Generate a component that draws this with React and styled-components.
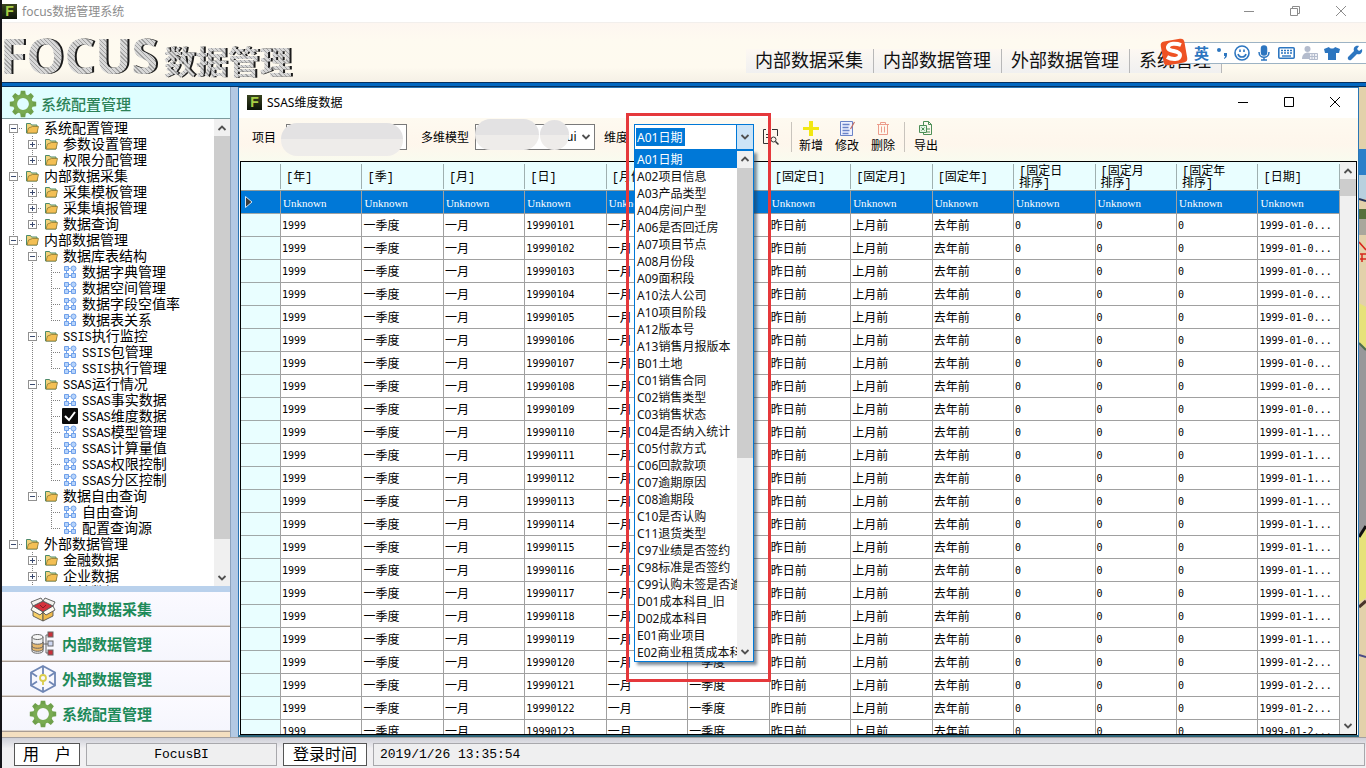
import React, { useState } from "react";
import styled, { createGlobalStyle } from "styled-components";

const GlobalStyle = createGlobalStyle`
    * { box-sizing: border-box; }
    html, body { margin: 0; padding: 0; }
    body {
        font-family: "Noto Sans", "Noto Sans CJK SC", sans-serif;
        font-size: 12px;
        color: #000;
        overflow: hidden;
    }
    button, input, select { font: inherit; color: inherit; margin: 0; border-radius: 0; }
    button { background: none; border: none; padding: 0; cursor: pointer; }
`;

/* ---------- data ---------- */

const MENU = ["内部数据采集", "内部数据管理", "外部数据管理", "系统管理"];

const TREE = [
    { name: "系统配置管理", open: true, children: [
        { name: "参数设置管理", children: [] },
        { name: "权限分配管理", children: [] },
    ] },
    { name: "内部数据采集", open: true, children: [
        { name: "采集模板管理", children: [] },
        { name: "采集填报管理", children: [] },
        { name: "数据查询", children: [] },
    ] },
    { name: "内部数据管理", open: true, children: [
        { name: "数据库表结构", open: true, children: [
            { name: "数据字典管理" }, { name: "数据空间管理" }, { name: "数据字段空值率" }, { name: "数据表关系" },
        ] },
        { name: "SSIS执行监控", open: true, children: [
            { name: "SSIS包管理" }, { name: "SSIS执行管理" },
        ] },
        { name: "SSAS运行情况", open: true, children: [
            { name: "SSAS事实数据" }, { name: "SSAS维度数据" }, { name: "SSAS模型管理" },
            { name: "SSAS计算量值" }, { name: "SSAS权限控制" }, { name: "SSAS分区控制" },
        ] },
        { name: "数据自由查询", open: true, children: [
            { name: "自由查询" }, { name: "配置查询源" },
        ] },
    ] },
    { name: "外部数据管理", open: true, children: [
        { name: "金融数据", children: [] },
        { name: "企业数据", children: [] },
        { name: "土地数据", children: [] },
    ] },
];

const DIMENSIONS = [
    "A01日期", "A02项目信息", "A03产品类型", "A04房间户型", "A06是否回迁房", "A07项目节点",
    "A08月份段", "A09面积段", "A10法人公司", "A10项目阶段", "A12版本号", "A13销售月报版本",
    "B01土地", "C01销售合同", "C02销售类型", "C03销售状态", "C04是否纳入统计", "C05付款方式",
    "C06回款款项", "C07逾期原因", "C08逾期段", "C10是否认购", "C11退货类型", "C97业绩是否签约",
    "C98标准是否签约", "C99认购未签是否逾期", "D01成本科目_旧", "D02成本科目", "E01商业项目", "E02商业租赁成本科目",
];

const COLUMNS = [
    "[年]", "[季]", "[月]", "[日]", "[月份]", "[季度]", "[固定日]", "[固定月]", "[固定年]",
    "[固定日\n排序]", "[固定月\n排序]", "[固定年\n排序]", "[日期]",
];

const ROWS = [COLUMNS.map(() => "Unknown")];
for (let d = 1; d <= 23; d++) {
    const day = String(d).padStart(2, "0");
    ROWS.push([
        "1999", "一季度", "一月", `199901${day}`, "一月", "一季度",
        "昨日前", "上月前", "去年前", "0", "0", "0", `1999-01-${day[0]}...`,
    ]);
}

/* ---------- icons ---------- */

const teeth = [0, 45, 90, 135, 180, 225, 270, 315];

const GearIcon = () => (
    <svg width="28" height="28" viewBox="0 0 28 28">
        <g fill="#6fa04b">
            {teeth.map((a) => (
                <path key={a} d="M11 6L11.800 .8h4.400l.8 5.200z" transform={`rotate(${a} 14 14)`} />
            ))}
        </g>
        <circle cx="14" cy="14" r="7.9" fill="none" stroke="#79ab52" strokeWidth="4" />
    </svg>
);

const BoxIcon = () => (
    <svg width="28" height="28" viewBox="0 0 28 28" stroke="#555" strokeWidth=".9" strokeLinejoin="round">
        <path d="M4 13l10 5v8L4 21z" fill="#f8cf66" />
        <path d="M24 13l-10 5v8l10-5z" fill="#efb94a" />
        <path d="M4 11l10-5 10 5-10 6z" fill="#d4323c" />
        <path d="M4 11L2 7l10-4 2 3zM24 11l2-4-10-4-2 3z" fill="#f4f2ee" />
        <path d="M4 11l-2 4 9 5 3-3zM24 11l2 4-9 5-3-3z" fill="#fffaf0" />
        <path d="M11 10l3 3 3-3" fill="none" stroke="#7d1a20" />
    </svg>
);

const DatabaseIcon = () => (
    <svg width="28" height="28" viewBox="0 0 28 28" stroke="#666" strokeWidth="1">
        <path d="M3 7v14c0 3 11 3 11 0V7" fill="#eee" />
        <path d="M3 12v7c0 3 11 3 11 0v-7c0 3-11 3-11 0z" fill="#e8b96e" />
        <ellipse cx="8.500" cy="7" rx="5.500" ry="2.500" fill="#f7f7f7" />
        <path d="M3 16c0 3 11 3 11 0" fill="none" />
        <path d="M14 14h5M21 5h-4v18h4" fill="none" />
        <rect x="19" y="2" width="5" height="5" fill="#c8313b" />
        <rect x="19" y="11" width="5" height="5" fill="#cfd8f2" />
        <rect x="19" y="20" width="5" height="5" fill="#c8313b" />
    </svg>
);

const CubeIcon = () => (
    <svg width="28" height="28" viewBox="0 0 28 28" fill="none" stroke="#6f86b4" strokeWidth="1.800">
        <path d="M14 1l12 6.500v13L14 27 2 20.500v-13z" />
        <path d="M14 1v8M2 7.500l6 4M26 7.500l-6 4M2 20.500l6-4M26 20.500l-6-4M14 27v-5" />
        <circle cx="14" cy="13" r="3" stroke="#d9cc4c" />
        <path d="M14 16v4" stroke="#d9cc4c" />
    </svg>
);

const FolderIcon = () => (
    <svg width="14" height="14" viewBox="0 0 14 14">
        <path d="M1.500 2.500h4l1 1.500h5.500v8h-10.500z" fill="#f1d27a" stroke="#4d8a6b" />
        <path d="M3.500 7l4-1.500h6l-1.500 6.500h-10z" fill="#f3bf54" stroke="#8a7a35" strokeWidth=".8" />
    </svg>
);

const ModuleIcon = () => (
    <svg width="14" height="14" viewBox="0 0 14 14" fill="#b7d4fb" stroke="#6fa0ea">
        <path d="M1.500 1.500h4v4h-4zM1.500 8.500h4v4h-4zM8.500 8.500h4v4h-4z" />
        <circle cx="10.500" cy="3.500" r="2.500" />
        <path d="M5.500 3.500h2M10.500 6v2M3.500 6v2M5.500 10.500h3" />
    </svg>
);

const CheckedIcon = () => (
    <svg width="16" height="16" viewBox="0 0 16 16">
        <rect width="16" height="16" rx="1" fill="#0a0a0a" />
        <path d="M3 8l4 4 6-8" fill="none" stroke="#fff" strokeWidth="2" />
    </svg>
);

const Chevron = ({ up, size = 10 }) => (
    <svg width={size} height={size} viewBox="0 0 10 10" fill="none" stroke="#505050" strokeWidth="1.800">
        <path d={up ? "M1.500 7L5 3.500 8.500 7" : "M1.500 3L5 6.500 8.500 3"} />
    </svg>
);

const MinIcon = () => (
    <svg width="12" height="12" viewBox="0 0 12 12" stroke="currentColor"><path d="M1 6.500h10" /></svg>
);
const MaxIcon = () => (
    <svg width="12" height="12" viewBox="0 0 12 12" fill="none" stroke="currentColor"><path d="M1.500 1.500h9v9h-9z" /></svg>
);
const RestoreIcon = () => (
    <svg width="12" height="12" viewBox="0 0 12 12" fill="none" stroke="currentColor">
        <path d="M1.500 3.500h7v7h-7zM3.500 3V1.500h7v7H9" />
    </svg>
);
const CloseIcon = () => (
    <svg width="12" height="12" viewBox="0 0 12 12" stroke="currentColor"><path d="M1 1l10 10M11 1L1 11" /></svg>
);

const FindIcon = () => (
    <svg width="18" height="18" viewBox="0 0 18 18" fill="none" stroke="#333">
        <path d="M4 1.500H1.500V15.500H8M10 1.500h5.500V8M4 6.500h5M4 9.500h3" />
        <circle cx="11.500" cy="11.500" r="2.500" />
        <path d="M13.500 13.500l3 3" strokeWidth="1.500" />
    </svg>
);
const PlusIcon = () => (
    <svg width="18" height="18" viewBox="0 0 18 18"><path d="M7 1h4v6h6v3h-6v6H7v-6H1V7h6z" fill="#f2e712" /></svg>
);
const EditIcon = () => (
    <svg width="18" height="18" viewBox="0 0 18 18" fill="none" stroke="#6b83c7">
        <path d="M2.500 1.500h12v14h-12z" fill="#eef1ff" />
        <path d="M4.500 4.500h7M4.500 7.500h6M4.500 10.500h7M4.500 13.500h6" strokeWidth="1.500" />
        <path d="M16.500 2l-4 7" stroke="#c36d63" strokeWidth="1.200" />
    </svg>
);
const TrashIcon = () => (
    <svg width="18" height="18" viewBox="0 0 18 18" fill="none" stroke="#ec9c8b">
        <path d="M3 4.500h12M6.500 4V2.500h5V4M4.500 5v9.500h9V5M7.500 6.500v6M10.500 6.500v6" />
    </svg>
);
const ExportIcon = () => (
    <svg width="18" height="18" viewBox="0 0 18 18" fill="none" stroke="#4d8f57">
        <path d="M6.500 5V1.500h5l3 3v10h-8V13M11.500 1.500v3h3" />
        <path d="M2.500 5.500h7v7h-7z" fill="#e4f5e4" />
        <path d="M4.500 7.500l3 3M7.500 7.500l-3 3M10 9h3M10 12h3" />
    </svg>
);

/* ---------- application frame ---------- */

const Shell = styled.div`
    display: flex;
    flex-direction: column;
    height: 100vh;
    border-left: 2px solid #15151a;
    background: #fff;
`;

const AppTitle = styled.header`
    display: flex;
    align-items: center;
    height: 23px;
    padding-right: 2px;
    color: #8c8c8c;
    border-bottom: 1px solid #f2efec;
`;

const AppBadge = styled.span`
    display: flex;
    align-items: center;
    justify-content: center;
    width: 15px;
    height: 15px;
    margin-right: 5px;
    background: linear-gradient(#39441f, #0c1208);
    color: #a7cf45;
    font: bold 14px "Liberation Sans", sans-serif;
`;

const Caption = styled.span`
    flex: 1;
`;

const WindowButton = styled.button`
    display: flex;
    align-items: center;
    justify-content: center;
    width: 46px;
    height: 20px;
`;

const Banner = styled.div`
    position: relative;
    display: flex;
    align-items: flex-start;
    height: 59px;
    background: linear-gradient(#fdf6f0, #fefaf0 30%, #fefaef 75%, #f5f0e6);
`;

const Logo = styled.h1`
    display: flex;
    align-items: baseline;
    gap: 6px;
    flex: 1;
    margin: 0 0 0 -2px;
    line-height: 66px;
    filter: drop-shadow(2px 0 0 #1c1c1c);
`;

const LogoText = styled.span`
    font-family: "Open Sans", "Noto Sans CJK SC", sans-serif;
    font-size: ${props => props.$size}px;
    font-weight: bold;
    color: transparent;
    background: repeating-linear-gradient(45deg, #a2a2a2 0 1px, #d8d8d8 1px 3px);
    background-clip: text;
    -webkit-background-clip: text;
`;

const Menu = styled.nav`
    display: flex;
    margin: 26px 144px 0 0;
    background: linear-gradient(#fdf8f2, #f0f0f0);
`;

const MenuLink = styled.a`
    padding: 0 10px 0 9px;
    font-size: 18px;
    line-height: 22px;
    height: 24px;
    color: #111;
    text-decoration: none;
    border-right: 1px solid #b8b8b8;
    white-space: nowrap;
`;

const BlueBar = styled.div`
    height: 5px;
    background: #0368c1;
    border-top: 1px solid #06305f;
    border-bottom: 1px solid #06305f;
`;

const Main = styled.main`
    display: flex;
    flex: 1;
    min-height: 0;
    background: #b3c9e3;
`;

/* input method bar floats above everything */
const ImeBar = styled.div`
    position: absolute;
    top: 19px;
    right: 0;
    display: flex;
    align-items: center;
    justify-content: space-between;
    width: 192px;
    height: 22px;
    padding: 0 3px 0 20px;
    background: #fff;
    border-top: 1px solid #9db3c4;
    border-bottom: 1px solid #9db3c4;
    color: #2d76c0;
    font-size: 15px;
    font-weight: bold;
    line-height: 20px;
`;

const ImeLogo = styled.span`
    position: absolute;
    top: -6px;
    left: -15px;
    display: flex;
`;

/* ---------- sidebar ---------- */

const Sidebar = styled.aside`
    display: flex;
    flex-direction: column;
    width: 229px;
    margin-right: 7px;
    background: #fff;
    border-right: 1px solid #8ea3bd;
`;

const SideHeader = styled.h2`
    display: flex;
    align-items: center;
    gap: 4px;
    height: 32px;
    margin: 0;
    padding: 2px 0 0 7px;
    background: #dffeff;
    border-bottom: 1px solid #7c9a9c;
    color: #2c8257;
    font-size: 15px;
    font-weight: 500;
    line-height: 20px;
`;

const TreeArea = styled.div`
    display: flex;
    flex: 1;
    min-height: 0;
`;

const TreeList = styled.ul`
    flex: 1;
    margin: 0;
    padding: 1px 0 0 2px;
    overflow: hidden;
    list-style: none;
`;

const TreeRow = styled.li`
    display: flex;
    align-items: center;
    height: 16px;
    white-space: nowrap;
`;

const dots = "repeating-linear-gradient(#808080 0 1px, transparent 1px 2px)";
const dotsH = "repeating-linear-gradient(90deg, #808080 0 1px, transparent 1px 2px)";

const Guide = styled.span`
    display: flex;
    align-items: center;
    justify-content: center;
    width: 19px;
    height: 16px;
    background-repeat: no-repeat;
    background-image: ${dots}, ${dots}, ${dotsH};
    background-position: 9px 0, 9px 8px, 9px 8px;
    background-size: ${props => (props.$up ? "1px 8px" : "0 0")},
        ${props => (props.$down ? "1px 8px" : "0 0")},
        ${props => (props.$node ? "10px 1px" : "0 0")};
`;

const Toggle = styled.button`
    width: 9px;
    height: 9px;
    border: 1px solid #919191;
    background: ${props => (props.$open
        ? "linear-gradient(#3a4a70, #3a4a70) center / 5px 1px no-repeat, #fff"
        : "linear-gradient(#3a4a70, #3a4a70) center / 5px 1px no-repeat, linear-gradient(#3a4a70, #3a4a70) center / 1px 5px no-repeat, #fff")};
`;

const NodeIcon = styled.span`
    display: flex;
    justify-content: center;
    width: 18px;
    margin-right: 3px;
`;

const NodeName = styled.span`
    font-size: 14px;
    line-height: 16px;
`;

const Latin = styled.span`
    font-family: "Liberation Mono", monospace;
    font-size: 12px;
    line-height: 0;
`;

const Scroll = styled.div`
    display: flex;
    flex-direction: column;
    align-items: stretch;
    width: 16px;
    background: #f0f0f0;
`;

const ScrollButton = styled.button`
    display: flex;
    align-items: center;
    justify-content: center;
    height: 17px;
    flex: none;
`;

const Track = styled.div`
    flex: 1;
`;

const Thumb = styled.div`
    height: ${props => props.$size};
    background: #cdcdcd;
`;

const SideNav = styled.nav`
    display: flex;
    flex-direction: column;
    padding-bottom: 5px;
    border-top: 6px solid #b9d1ec;
    background: #f4dfc0;
`;

const SideButton = styled.button`
    display: flex;
    align-items: center;
    gap: 5px;
    height: 35px;
    padding-left: 27px;
    background: linear-gradient(#fbfaff, #f5f6fd);
    border-bottom: 1px solid #a89c93;
    box-shadow: inset 0 -1px 0 #ddd5cf;
    color: #1d8a59;
    font-size: 15px;
    font-weight: bold;
    line-height: 20px;
`;

/* ---------- child window ---------- */

const ChildWindow = styled.section`
    display: flex;
    flex-direction: column;
    flex: 1;
    min-width: 0;
    border: 1px solid #2a76b5;
    border-bottom: 2px solid #2c6479;
    background: #fff;
`;

const ChildTitle = styled.header`
    display: flex;
    align-items: center;
    height: 30px;
    padding: 0 0 2px 8px;
`;

const Toolbar = styled.div`
    display: flex;
    align-items: center;
    height: 43px;
    padding: 0 0 6px 13px;
    background: linear-gradient(#fefaf0, #fef6ec 60%, #f9fbef);
`;

const Field = styled.div`
    position: relative;
    display: flex;
    align-items: center;
    margin-right: ${props => props.$gap || 0}px;
`;

const FieldLabel = styled.label`
    width: ${props => props.$width}px;
    white-space: nowrap;
`;

const TextBox = styled.input`
    width: 121px;
    height: 26px;
    border: 1px solid #7a7a7a;
    background: #fff;
`;

const ModelSelect = styled.select`
    width: 120px;
    height: 26px;
    padding: 0 0 0 90px;
    border: 1px solid #7a7a7a;
    background: #fff;
    appearance: none;
`;

const SelectArrow = styled.span`
    position: absolute;
    right: 4px;
    display: flex;
    pointer-events: none;
`;

const Smudge = styled.span`
    position: absolute;
    top: ${props => props.$top}px;
    left: ${props => props.$left}px;
    width: ${props => props.$width}px;
    height: ${props => props.$height}px;
    border-radius: 16px;
    background: linear-gradient(#e3e2e3 0 50%, #eeecea 50%);
`;

const Combo = styled.div`
    position: relative;
    display: flex;
    width: 120px;
    height: 26px;
    border: 1px solid #0078d7;
    background: #fff;
`;

const ComboInput = styled.input`
    width: 49px;
    height: 18px;
    margin: 3px auto 0 1px;
    padding: 0 1px;
    border: none;
    outline: none;
    background: #0078d7;
    color: #fff;
`;

const ComboButton = styled.button`
    display: flex;
    align-items: center;
    justify-content: center;
    width: 17px;
    background: #cce4f7;
    border-left: 1px solid #0078d7;
`;

const Popup = styled.div`
    position: absolute;
    z-index: 2;
    top: 25px;
    left: -1px;
    display: flex;
    width: 120px;
    border: 1px solid #0078d7;
    background: #fff;
    box-shadow: 3px 3px 3px rgba(40, 60, 80, .6);
`;

const OptionList = styled.ul`
    flex: 1;
    min-width: 0;
    margin: 0;
    padding: 0;
    list-style: none;
`;

const Option = styled.li`
    height: 17px;
    padding-left: 2px;
    line-height: 17px;
    overflow: hidden;
    white-space: nowrap;
    background: ${props => (props.$selected ? "#0078d7" : "#fff")};
    color: ${props => (props.$selected ? "#fff" : "#111")};
`;

const Highlight = styled.div`
    position: absolute;
    z-index: 3;
    top: -12px;
    left: -9px;
    width: 145px;
    height: 569px;
    border: 3px solid #e5383b;
    pointer-events: none;
`;

const FindButton = styled.button`
    display: flex;
    margin: 0 10px 0 8px;
`;

const ToolButton = styled.button`
    display: flex;
    flex-direction: column;
    align-items: center;
    width: 36px;
    line-height: 16px;
`;

const Separator = styled.span`
    width: 1px;
    height: 30px;
    margin: 0 ${props => props.$gap}px;
    background: #c9c4bd;
`;

const GridFrame = styled.div`
    display: flex;
    flex: 1;
    min-height: 0;
    margin: 0 1px;
    border: 1px solid #000;
    overflow: hidden;
    background: #fff;
`;

const GridView = styled.div`
    flex: 1;
    min-width: 0;
    overflow: hidden;
`;

const Grid = styled.table`
    width: 100%;
    table-layout: fixed;
    border-collapse: separate;
    border-spacing: 0;
`;

const HeadCell = styled.th`
    width: ${props => (props.$corner ? "40px" : "auto")};
    height: 29px;
    padding: 3px 0 0 5px;
    background: linear-gradient(#9fb0b0, #9fb0b0) right center / 1px 25px no-repeat, #e9feff;
    border-bottom: 1px solid #909c9c;
    font-family: "Liberation Mono", "Noto Sans CJK SC", monospace;
    font-weight: normal;
    line-height: 12px;
    text-align: left;
    white-space: pre;
`;

const RowHead = styled.th`
    height: 23px;
    padding: 0 0 0 3px;
    border-bottom: 1px solid #a0a8a8;
    border-right: 1px solid #a0a0a0;
    background: ${props => (props.$active ? "#0078d7" : "#e9feff")};
    text-align: left;
    line-height: 0;
`;

const Cell = styled.td`
    height: 23px;
    padding: 2px 0 0 1px;
    overflow: hidden;
    border-right: 1px solid #a0a0a0;
    border-bottom: 1px solid #a0a0a0;
    background: #fff;
    font-family: "DejaVu Sans Mono", "Noto Sans CJK SC", monospace;
    font-size: ${props => (props.$latin ? 10 : 12)}px;
    line-height: 16px;
    white-space: nowrap;
`;

const ActiveCell = styled(Cell)`
    padding-left: 2px;
    background: #0078d7;
    color: #fff;
    font-family: "Liberation Serif", serif;
    font-size: 11px;
`;

const Wallpaper = styled.div`
    width: 7px;
    overflow: hidden;
    background: #e3d1ab;
`;

/* ---------- status bar ---------- */

const StatusBar = styled.footer`
    display: flex;
    gap: 6px;
    height: 31px;
    padding: 5px 1px 2px 12px;
    background: linear-gradient(#cfd0d8, #f1f0f2 35%);
    border-top: 1px solid #a5a0a0;
    font-family: "Liberation Mono", "Noto Sans CJK SC", monospace;
    line-height: 22px;
`;

const StatusLabel = styled.span`
    width: ${props => props.$width}px;
    padding-top: 1px;
    border: 1px solid #555;
    background: #fff;
    font-size: 16px;
    text-align: center;
`;

const StatusValue = styled.span`
    flex: ${props => (props.$width ? "none" : 1)};
    width: ${props => (props.$width ? `${props.$width}px` : "auto")};
    padding: 0 6px;
    border: 1px solid #a8a8ac;
    background: #efeff0;
    font-size: 13px;
    text-align: ${props => (props.$width ? "center" : "left")};
`;

/* ---------- components ---------- */

const WindowControls = ({ maximized }) => (
    <>
        <WindowButton aria-label="最小化"><MinIcon /></WindowButton>
        <WindowButton aria-label="最大化">{maximized ? <RestoreIcon /> : <MaxIcon />}</WindowButton>
        <WindowButton aria-label="关闭"><CloseIcon /></WindowButton>
    </>
);

const ScrollBar = ({ size }) => (
    <Scroll>
        <ScrollButton aria-label="向上滚动"><Chevron up /></ScrollButton>
        <Track><Thumb $size={size} /></Track>
        <ScrollButton aria-label="向下滚动"><Chevron /></ScrollButton>
    </Scroll>
);

function flatten(nodes, lines = []) {
    return nodes.flatMap((node, i) => {
        const last = i === nodes.length - 1;
        const first = lines.length === 0 && i === 0;
        const row = { node, lines, last, first };
        return [row, ...(node.open ? flatten(node.children, [...lines, !last]) : [])];
    });
}

function Tree() {
    const [selected, setSelected] = useState("SSAS维度数据");

    return (
        <TreeList>
            {flatten(TREE).map(({ node, lines, last, first }) => {
                const [, latin, rest] = node.name.match(/^([A-Z]*)(.*)$/);
                return (
                    <TreeRow key={node.name + lines.length} onClick={() => !node.children && setSelected(node.name)}>
                        {lines.map((on, i) => <Guide key={i} $up={on} $down={on} />)}
                        <Guide $up={!first} $down={!last} $node>
                            {node.children && <Toggle $open={node.open} aria-label={node.name} />}
                        </Guide>
                        <NodeIcon>
                            {node.children ? <FolderIcon /> : node.name === selected ? <CheckedIcon /> : <ModuleIcon />}
                        </NodeIcon>
                        <NodeName>{latin && <Latin>{latin}</Latin>}{rest}</NodeName>
                    </TreeRow>
                );
            })}
        </TreeList>
    );
}

const Ime = () => (
    <ImeBar>
        <ImeLogo>
            <svg width="30" height="30" viewBox="0 0 30 30">
                <rect x="3" y="3" width="24" height="24" rx="4" fill="#ee5224" transform="rotate(-10 15 15)" />
                <path d="M22 8c-5-2-12-2-13 2-1 5 12 3 12 8 0 5-8 5-13 2" fill="none" stroke="#fff" strokeWidth="4" />
            </svg>
        </ImeLogo>
        <span>英</span>
        <svg width="12" height="16" viewBox="0 0 12 16" fill="#2d76c0">
            <circle cx="3" cy="5" r="2" />
            <path d="M8 8h3v2c0 2-1 3-3 4v-1c1-1 1-1 1-2H8z" />
        </svg>
        <svg width="16" height="16" viewBox="0 0 16 16" fill="none" stroke="#2d76c0" strokeWidth="1.600">
            <circle cx="8" cy="8" r="7" />
            <path d="M6 4.500v2.500M10 4.500v2.500M4 9c1 4 7 4 8 0" />
        </svg>
        <svg width="14" height="16" viewBox="0 0 14 16" fill="none" stroke="#2d76c0" strokeWidth="1.500">
            <rect x="4.500" y="1" width="5" height="9" rx="2.500" fill="#2d76c0" />
            <path d="M2 7c0 7 10 7 10 0M7 12v3M4 15h6" />
        </svg>
        <svg width="17" height="14" viewBox="0 0 17 14">
            <rect x=".8" y="1.800" width="15.400" height="10.400" rx="1" fill="#fff" stroke="#2d76c0" strokeWidth="1.600" />
            <path d="M3 4.500h11M3 7h11" stroke="#2d76c0" strokeWidth="1.600" strokeDasharray="2 1" />
            <path d="M4 10h9" stroke="#2d76c0" strokeWidth="1.400" />
        </svg>
        <svg width="16" height="16" viewBox="0 0 16 16" fill="#b4bccd">
            <circle cx="5.500" cy="4" r="3" />
            <path d="M0 14c0-8 10-8 10-3v3z" />
            <path d="M7.500 8.500h8v6h-8zM10 8.500v6M12.500 8.500v6M7.500 11.500h8" fill="#eef0f5" stroke="#b4bccd" />
        </svg>
        <svg width="16" height="16" viewBox="0 0 16 16" fill="#2d76c0">
            <path d="M5 2c1 2 5 2 6 0l5 2-1 4h-3v7H4V8H1L0 4z" />
        </svg>
        <svg width="16" height="16" viewBox="0 0 16 16" fill="#2d76c0">
            <path d="M15 4l-3 2-2-2 2-3C8 0 6 3 7 6l-6 6c-1 2 1 4 3 3l6-6c3 1 6-1 5-5z" />
        </svg>
    </ImeBar>
);

const DimensionCombo = () => {
    const [value, setValue] = useState(DIMENSIONS[0]);

    return (
        <Combo>
            <ComboInput id="dimension" role="combobox" aria-expanded="true" value={value} readOnly />
            <ComboButton aria-label="展开"><Chevron /></ComboButton>
            <Popup>
                <OptionList role="listbox">
                    {DIMENSIONS.map((name) => (
                        <Option
                            key={name}
                            role="option"
                            aria-selected={name === value}
                            $selected={name === value}
                            onClick={() => setValue(name)}
                        >
                            {name}
                        </Option>
                    ))}
                </OptionList>
                <ScrollBar size="61%" />
            </Popup>
            <Highlight />
        </Combo>
    );
};

const DataGrid = () => (
    <GridFrame>
        <GridView>
            <Grid>
                <thead>
                    <tr>
                        <HeadCell $corner />
                        {COLUMNS.map((name) => <HeadCell key={name} scope="col">{name}</HeadCell>)}
                    </tr>
                </thead>
                <tbody>
                    {ROWS.map((row, i) => (
                        <tr key={i}>
                            <RowHead $active={i === 0} scope="row">
                                {i === 0 && (
                                    <svg width="9" height="12" viewBox="0 0 9 12">
                                        <path d="M1.500 .5v11L8 6z" fill="#3b3b3b" stroke="#cfe6f8" />
                                    </svg>
                                )}
                            </RowHead>
                            {row.map((value, j) => (i === 0
                                ? <ActiveCell key={j}>{value}</ActiveCell>
                                : <Cell key={j} $latin={/^[\w.-]+$/.test(value)}>{value}</Cell>
                            ))}
                        </tr>
                    ))}
                </tbody>
            </Grid>
        </GridView>
        <ScrollBar size="17px" />
    </GridFrame>
);

const Scenery = () => (
    <Wallpaper>
        <svg width="7" height="650" viewBox="0 0 7 650">
            <path d="M0 62h7v42H0z" fill="#2b7fc9" />
            <path d="M0 88h7v24H0z" fill="#b8d0de" />
            <path d="M0 112l7 2" stroke="#24335a" strokeWidth="2" />
            <path d="M0 122h7v10H0z" fill="#56703c" />
            <path d="M0 132h7v16H0z" fill="#a9a79c" />
            <path d="M0 155l7 8M1 167h6M1 172h6M3 167v8" stroke="#d8261c" strokeWidth="1.500" fill="none" />
            <path d="M0 216l7 4v41l-7-6z" fill="#e6e27a" />
            <path d="M0 256l7 7v175l-7 10z" fill="#98989a" />
            <path d="M0 256l7 7" stroke="#4c6e4a" strokeWidth="2" />
            <path d="M0 450l7-9v70l-7 4z" fill="#e6e27a" />
            <path d="M0 450l7-11" stroke="#111" strokeWidth="3" />
            <path d="M0 520l7-6" stroke="#4a352b" strokeWidth="3" />
            <path d="M0 568l7 2" stroke="#4a4a86" strokeWidth="2" />
        </svg>
    </Wallpaper>
);

function App() {
    return (
        <Shell>
            <GlobalStyle />
            <AppTitle>
                <AppBadge>F</AppBadge>
                <Caption>focus数据管理系统</Caption>
                <WindowControls maximized />
            </AppTitle>

            <Banner>
                <Logo>
                    <LogoText $size={48}>FOCUS</LogoText>
                    <LogoText $size={32}>数据管理</LogoText>
                </Logo>
                <Menu>
                    {MENU.map((name) => <MenuLink key={name} href="#">{name}</MenuLink>)}
                </Menu>
                <Ime />
            </Banner>
            <BlueBar />

            <Main>
                <Sidebar>
                    <SideHeader><GearIcon />系统配置管理</SideHeader>
                    <TreeArea>
                        <Tree />
                        <ScrollBar size="93%" />
                    </TreeArea>
                    <SideNav>
                        <SideButton><BoxIcon />内部数据采集</SideButton>
                        <SideButton><DatabaseIcon />内部数据管理</SideButton>
                        <SideButton><CubeIcon />外部数据管理</SideButton>
                        <SideButton><GearIcon />系统配置管理</SideButton>
                    </SideNav>
                </Sidebar>

                <ChildWindow>
                    <ChildTitle>
                        <AppBadge>F</AppBadge>
                        <Caption>SSAS维度数据</Caption>
                        <WindowControls />
                    </ChildTitle>
                    <Toolbar>
                        <Field $gap={14}>
                            <FieldLabel htmlFor="project" $width={34}>项目</FieldLabel>
                            <TextBox id="project" />
                            <Smudge $top={-1} $left={29} $width={122} $height={33} />
                        </Field>
                        <Field $gap={9}>
                            <FieldLabel htmlFor="model" $width={54}>多维模型</FieldLabel>
                            <ModelSelect id="model"><option>ui</option></ModelSelect>
                            <SelectArrow><Chevron /></SelectArrow>
                            <Smudge $top={-5} $left={54} $width={64} $height={31} />
                            <Smudge $top={-4} $left={119} $width={29} $height={30} />
                        </Field>
                        <Field>
                            <FieldLabel htmlFor="dimension" $width={30}>维度</FieldLabel>
                            <DimensionCombo />
                        </Field>
                        <FindButton aria-label="查找"><FindIcon /></FindButton>
                        <Separator $gap={1} />
                        <ToolButton><PlusIcon />新增</ToolButton>
                        <ToolButton><EditIcon />修改</ToolButton>
                        <ToolButton><TrashIcon />删除</ToolButton>
                        <Separator $gap={3} />
                        <ToolButton><ExportIcon />导出</ToolButton>
                    </Toolbar>
                    <DataGrid />
                </ChildWindow>
                <Scenery />
            </Main>

            <StatusBar>
                <StatusLabel $width={66}>用&emsp;户</StatusLabel>
                <StatusValue $width={191}>FocusBI</StatusValue>
                <StatusLabel $width={84}>登录时间</StatusLabel>
                <StatusValue>2019/1/26 13:35:54</StatusValue>
            </StatusBar>
        </Shell>
    );
}

export default App;
